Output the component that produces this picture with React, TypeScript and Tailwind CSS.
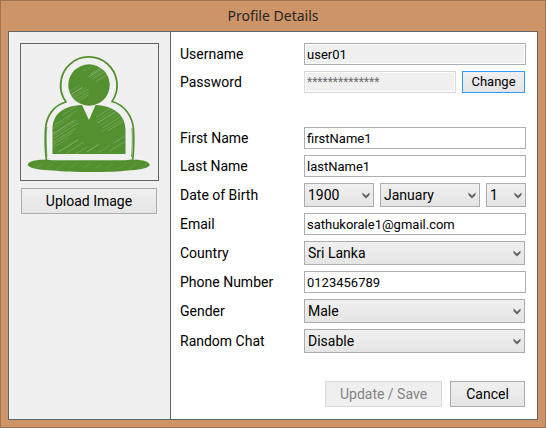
import type { ReactNode } from "react";

const control =
  "w-full min-w-0 border border-[#abadb3] text-black outline-none";
const button =
  "border border-[#acacac] bg-linear-to-b from-[#f0f0f0] to-[#e5e5e5] text-sm text-black";

function Row({ label, id, children }: { label: string; id: string; children: ReactNode }) {
  return (
    <div className="flex items-center">
      <label htmlFor={id} className="w-[124px] shrink-0 text-sm">
        {label}
      </label>
      <div className="flex min-w-0 flex-1 items-center gap-1.5">{children}</div>
    </div>
  );
}

function TextBox({ id, value, readOnly }: { id: string; value: string; readOnly?: boolean }) {
  return (
    <input
      id={id}
      type="text"
      defaultValue={value}
      readOnly={readOnly}
      className={`${control} h-[22px] px-0.5 text-[13px] ${
        readOnly ? "bg-[#f0f0f0] shadow-[inset_0_0_0_1px_#fff]" : "bg-white"
      }`}
    />
  );
}

function Select({
  id,
  options,
  size = "flex-1",
  label,
}: {
  id: string;
  options: string[];
  size?: string;
  label?: string;
}) {
  return (
    <div className={`relative min-w-0 ${size}`}>
      <select
        id={id}
        aria-label={label}
        className={`${control} block h-6 appearance-none border-[#acacac] bg-linear-to-b from-[#f0f0f0] to-[#e5e5e5] pl-[3px] text-sm`}
      >
        {options.map((o) => (
          <option key={o}>{o}</option>
        ))}
      </select>
      <svg
        viewBox="0 0 8 7"
        className="pointer-events-none absolute top-[9px] right-1 h-[7px] w-2"
        fill="#606060"
      >
        <path d="M0.5 0.5 L4 3.8 L7.5 0.5 V3 L4 6.6 L0.5 3 Z" />
      </svg>
    </div>
  );
}

const hatch = [
  [68, 96, 14], [69, 98, 17], [70, 100, 18], [72, 102, 16], [75, 103, 13], [68, 92, 11],
  [88, 77, 17], [90, 78, 17], [92, 79, 16], [90, 74, 14], [95, 82, 12], [82, 72, 10],
  [52, 134, 22], [52, 136, 25], [52, 139, 26], [53, 142, 22], [52, 145, 20], [52, 148, 17],
  [58, 152, 20], [52, 129, 18], [54, 125, 16], [66, 153, 17], [75, 154, 12], [95, 121, 18],
  [97, 123, 21], [99, 126, 23], [102, 128, 22], [96, 117, 14], [107, 131, 18], [101, 132, 22],
  [86, 152, 12], [97, 153, 12], [109, 151, 15], [113, 143, 12], [62, 115, 14], [66, 117, 12],
];

const baseHatch = [35, 45, 57, 68, 82, 94, 105, 118, 129, 139];

function Avatar() {
  return (
    <svg viewBox="21 44 136 136" className="block h-[136px] w-full" role="img" aria-label="Profile image">
      <defs>
        <clipPath id="figure">
          <circle cx="88.5" cy="85" r="20.7" />
          <path d="M52 154 V130 C52 114 62 106 81.5 105 L88.5 120 L95 105 C115 106 125 116 125 130 V154 Z" />
        </clipPath>
      </defs>
      <g fill="none" stroke="#539130" strokeLinejoin="round">
        <path
          strokeWidth="1.7"
          d="M46 161 C44.5 150 44.5 138 45 129 C46 115 54 105 65.5 102 A28.3 28.3 0 1 1 111.5 101.5 C124 105 132 116 133 129 C133.5 138 133.5 150 132 161"
        />
        <path
          strokeWidth="0.8"
          d="M46.3 157 C46 144 45 134 46.5 127 M61.5 94 C58 80 64 67 73 62 M115.5 94 C119 80 113 67 104 62 M131 157 C132 145 132 136 131.5 128"
        />
      </g>
      <g fill="#539130">
        <circle cx="88.5" cy="85" r="20.7" />
        <path d="M52 154 V130 C52 114 62 106 81.5 105 L88.5 120 L95 105 C115 106 125 116 125 130 V154 Z" />
        <path d="M27 165 C29 160 37 160 46 159.5 L51 160.3 H125 L131 159.5 C140 160 147 160 149.5 165 C147 169 137 170 127 170.5 C113 172.5 69 172.5 53 170.5 C39 170 30 169 27 165 Z" />
      </g>
      <g clipPath="url(#figure)" stroke="#f0f0f0">
        {hatch.map(([x, y, len], i) => (
          <line
            key={i}
            x1={x}
            y1={y}
            x2={x + len}
            y2={y - len * 0.62}
            strokeWidth={i % 3 === 0 ? 0.9 : 0.6}
            strokeOpacity={i % 2 === 0 ? 0.36 : 0.24}
          />
        ))}
      </g>
      <g stroke="#f0f0f0" strokeWidth="0.5" strokeOpacity="0.2">
        {baseHatch.map((x) => (
          <line key={x} x1={x} y1="169" x2={x + 8} y2="163" />
        ))}
      </g>
    </svg>
  );
}

export default function App() {
  return (
    <div className="flex min-h-screen flex-col border border-[#9f734f] bg-[#cc9467] px-[7px] pb-[7px] font-[Roboto,'Liberation_Sans',sans-serif] text-black">
      <h1 className="flex h-[30px] items-center justify-center font-['Noto_Sans','Open_Sans',sans-serif] text-sm text-[#2b2623]">
        Profile Details
      </h1>
      <main className="flex flex-1 border border-[#646464] bg-white">
        <aside className="w-[162px] shrink-0 border-r border-[#646464] bg-[#f0f0f0] px-[11px] pt-[11px]">
          <div className="border border-[#646464]">
            <Avatar />
          </div>
          <div className="mt-[7px] pr-0.5 pl-px">
            <button type="button" className={`${button} h-[26px] w-full`}>
              Upload Image
            </button>
          </div>
        </aside>
        <form className="flex min-w-0 flex-1 flex-col gap-1.5 pt-[11px] pr-[11px] pb-3 pl-[9px]">
          <Row label="Username" id="username">
            <TextBox id="username" value="user01" readOnly />
          </Row>
          <div className="mb-7">
            <Row label="Password" id="password">
              <input
                id="password"
                type="text"
                disabled
                defaultValue="**************"
                className="h-[22px] min-w-0 flex-1 border border-[#d9d9d9] bg-[#f0f0f0] px-0.5 text-xs text-[#6d6d6d] shadow-[inset_0_0_0_1px_#fff]"
              />
              <button
                type="button"
                className="mr-px h-[22px] w-[63px] border border-[#3399ff] bg-linear-to-b from-[#f0f0f0] to-[#e5e5e5] text-[13px]"
              >
                Change
              </button>
            </Row>
          </div>
          <Row label="First Name" id="first">
            <TextBox id="first" value="firstName1" />
          </Row>
          <Row label="Last Name" id="last">
            <TextBox id="last" value="lastName1" />
          </Row>
          <Row label="Date of Birth" id="year">
            <Select id="year" options={["1900", "1901"]} size="w-[70px]" />
            <Select id="month" label="Month" options={["January", "February"]} />
            <Select id="day" label="Day" options={["1", "2"]} size="w-10" />
          </Row>
          <Row label="Email" id="email">
            <TextBox id="email" value="sathukorale1@gmail.com" />
          </Row>
          <Row label="Country" id="country">
            <Select id="country" options={["Sri Lanka"]} size="mr-px flex-1" />
          </Row>
          <Row label="Phone Number" id="phone">
            <TextBox id="phone" value="0123456789" />
          </Row>
          <Row label="Gender" id="gender">
            <Select id="gender" options={["Male", "Female"]} size="mr-px flex-1" />
          </Row>
          <Row label="Random Chat" id="chat">
            <Select id="chat" options={["Disable", "Enable"]} size="mr-px flex-1" />
          </Row>
          <div className="mt-[22px] flex justify-end gap-2 pr-px">
            <button
              type="submit"
              disabled
              className="h-[26px] w-[117px] border border-[#d9d9d9] bg-[#efefef] text-sm text-[#838383]"
            >
              Update / Save
            </button>
            <button type="button" className={`${button} h-[26px] w-[75px]`}>
              Cancel
            </button>
          </div>
        </form>
      </main>
    </div>
  );
}
